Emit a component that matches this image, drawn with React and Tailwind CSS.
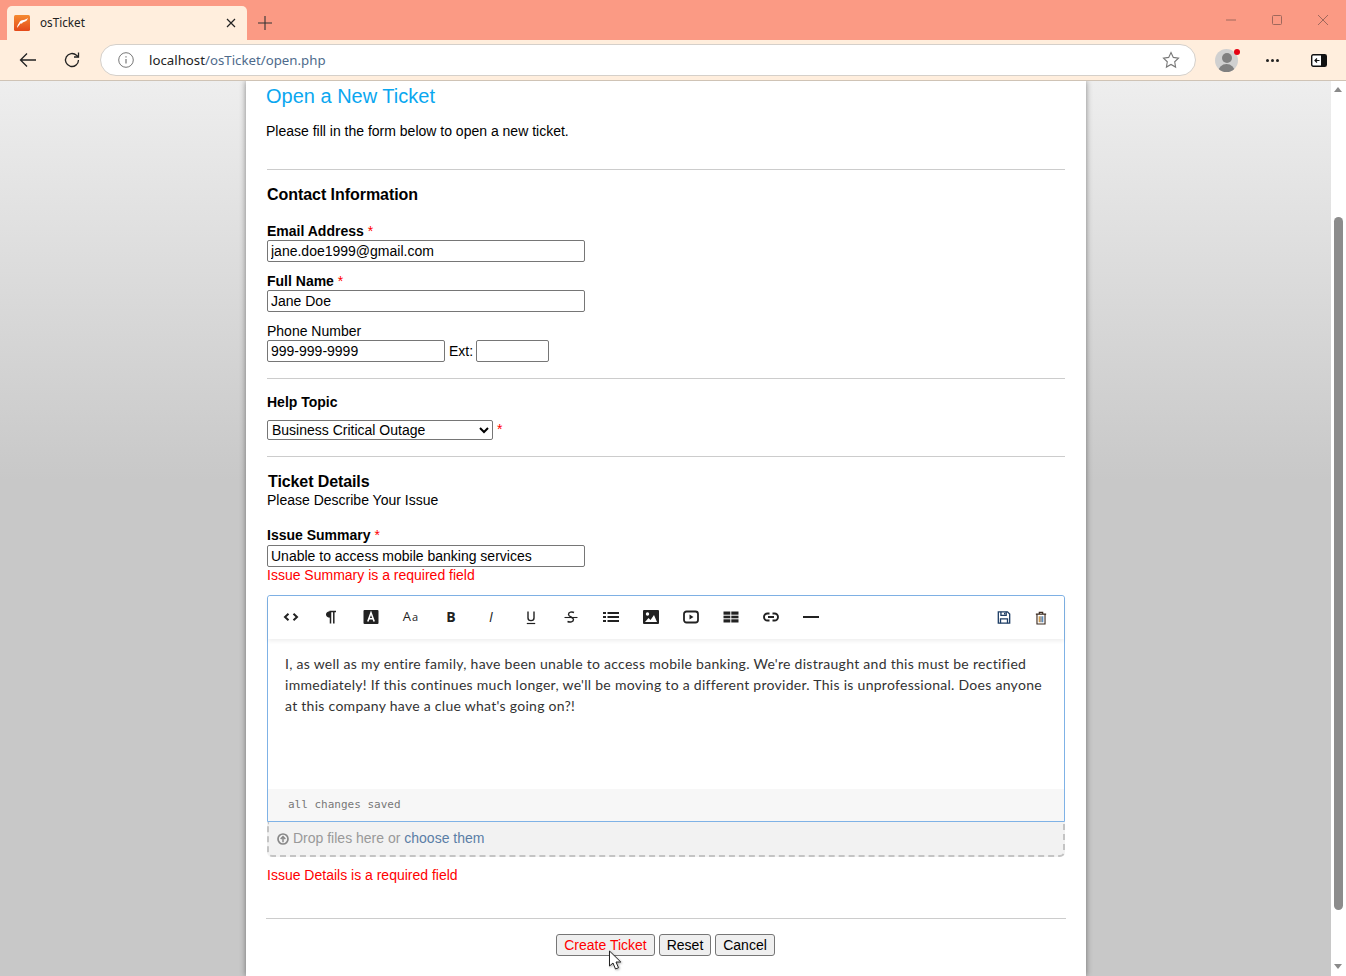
const F = { fontFamily: '"Liberation Sans", Arial, sans-serif' };

function Ic({ children, w = 16, h = 16, vb = "0 0 16 16", className = "" }) {
  return (
    <svg width={w} height={h} viewBox={vb} className={className} fill="none" stroke="#222" strokeWidth="1.5">
      {children}
    </svg>
  );
}

const toolbar = [
  <Ic key="code"><path d="M5.500 4.700 2 8l3.500 3.300M10.500 4.700 14 8l-3.500 3.300" strokeWidth="2" /></Ic>,
  <Ic key="para"><path d="M6.500 2.500h6.500M7.500 2.500v12M10.800 2.500v12" strokeWidth="1.500" /><path d="M7.500 2.300C4.300 2.300 3 3.800 3 5.500s1.300 3.200 4.500 3.200z" fill="#222" stroke="none" /></Ic>,
  <Ic key="color"><rect x=".5" y="1" width="15" height="14" rx="1" fill="#222" stroke="none" /><path d="M4.800 12.500 8 3.800l3.200 8.700M6 9.800h4" stroke="#fff" strokeWidth="1.600" /></Ic>,
  <span key="aa" className="text-[13px] leading-none text-[#222] tracking-[1px]" style={{ fontFamily: '"Open Sans", sans-serif' }}>A<span className="text-[11px]">a</span></span>,
  <span key="b" className="text-[14px] font-bold leading-none text-[#222]" style={{ fontFamily: '"Open Sans", sans-serif' }}>B</span>,
  <span key="i" className="text-[14px] italic leading-none text-[#222]" style={{ fontFamily: '"Open Sans", sans-serif' }}>I</span>,
  <Ic key="u"><path d="M5 2.500v6.500c0 3.500 6 3.500 6 0V2.500" strokeWidth="1.400" /><path d="M3.800 14.500h8.400" strokeWidth="1.200" /></Ic>,
  <Ic key="s"><path d="M1.500 8.500h13" strokeWidth="1.100" /><path d="M11 3.500C9 2.500 5.500 3 5.500 5.500 5.500 8 10.500 8 10.500 10.500c0 2.500-3.500 3-6 2" strokeWidth="1.400" /></Ic>,
  <Ic key="list"><path d="M4.500 4H16M4.500 8H16M4.500 12H16" strokeWidth="2" /><path d="M0 4h3M0 8h3M0 12h3" strokeWidth="2" /></Ic>,
  <Ic key="img"><rect x="0" y="1" width="16" height="14" rx="1" fill="#222" stroke="none" /><circle cx="4.500" cy="5" r="1.700" fill="#fff" stroke="none" /><path d="m2 13 3.500-4 2 2 3.500-5 3 7z" fill="#fff" stroke="none" /></Ic>,
  <Ic key="video"><rect x="1" y="2.500" width="14" height="11" rx="2.500" strokeWidth="1.800" /><path d="M6.500 5.500v5l4-2.500z" fill="#222" stroke="none" /></Ic>,
  <Ic key="table"><path d="M.5 2.500h15v11H.5z" fill="#222" stroke="none" /><path d="M0 6.200h16M0 9.800h16M7.800 2v12" stroke="#fff" strokeWidth="1" /></Ic>,
  <Ic key="link"><path d="M6.500 4.500H4.500a3.500 3.500 0 0 0 0 7h2M9.500 4.500h2a3.500 3.500 0 0 1 0 7h-2M5 8h6" strokeWidth="1.900" /></Ic>,
  <Ic key="hr"><path d="M0 8h16" strokeWidth="2" /></Ic>,
];

function Label({ children, req }) {
  return (
    <div className="h-[17px] text-[14px] font-bold leading-[17px] text-black">
      {children}
      {req && <span className="font-normal text-[#f00]"> *</span>}
    </div>
  );
}

function TextBox({ value, w }) {
  return (
    <input
      readOnly
      value={value}
      className={`${w} block h-[22px] rounded-[2px] border border-[#767676] bg-white px-[3px] text-[14px] text-black outline-none`}
      style={F}
    />
  );
}

function Hr({ className = "" }) {
  return <div className={`h-px bg-[#ccc] ${className}`} />;
}

export default function App() {
  return (
    <div className="flex h-[976px] w-[1346px] flex-col overflow-hidden" style={F}>
      {/* Tab strip */}
      <div className="flex h-10 shrink-0 items-end bg-[#fb9a84] pl-[7px]">
        <div className="flex h-[34px] w-[240px] items-center rounded-t-[5px] bg-[#ffeedd] pl-[7px] pr-[10px]">
          <svg width="16" height="16" viewBox="0 0 16 16">
            <defs>
              <linearGradient id="fav" x1="0" y1="0" x2="0" y2="1">
                <stop offset="0" stopColor="#f58a30" />
                <stop offset="1" stopColor="#e4491a" />
              </linearGradient>
            </defs>
            <rect width="16" height="16" rx="1.500" fill="url(#fav)" />
            <path d="M3 13c.2-2 .8-3.500 1.800-4.500C5.500 6 7.500 5 9.500 5c1.500-.2 3-.8 4.500-2-.5 1.500-1.500 3-3 3.500-1.500.5-2.500 1-3 2L6.500 8.500 5 10.500z" fill="#fff" />
          </svg>
          <span className="ml-[10px] flex-1 text-[11.700px] text-[#222]" style={{ fontFamily: '"Noto Sans", sans-serif' }}>osTicket</span>
          <svg width="10" height="10" viewBox="0 0 10 10" stroke="#222" strokeWidth="1.200" className="mr-[1px]"><path d="m1 1 8 8M9 1 1 9" /></svg>
        </div>
        <div className="flex h-[34px] w-[36px] items-center justify-center">
          <svg width="16" height="16" viewBox="0 0 16 16" stroke="#333" strokeWidth="1.100"><path d="M8 1v14M1 8h14" /></svg>
        </div>
        <div className="flex-1" />
        <div className="flex h-10 items-center gap-[34px] pr-[17px]">
          <svg width="12" height="12" viewBox="0 0 12 12" stroke="#a0685c" strokeWidth="1"><path d="M1 6h10" /></svg>
          <svg width="12" height="12" viewBox="0 0 12 12" stroke="#a0685c" strokeWidth="1" fill="none"><rect x="1.500" y="1.500" width="9" height="9" rx="1" /></svg>
          <svg width="12" height="12" viewBox="0 0 12 12" stroke="#a0685c" strokeWidth="1"><path d="m1 1 10 10M11 1 1 11" /></svg>
        </div>
      </div>

      {/* Toolbar */}
      <div className="flex h-[41px] shrink-0 items-center border-b border-[#cfc3b5] bg-[#ffeedd]">
        <div className="flex w-[100px] items-center gap-[26px] pl-[19px]">
          <svg width="18" height="16" viewBox="0 0 18 16" fill="none" stroke="#222" strokeWidth="1.300"><path d="M17 8H1.500M8 1.500 1.500 8 8 14.500" /></svg>
          <svg width="18" height="18" viewBox="0 0 18 18" fill="none" stroke="#222" strokeWidth="1.300"><path d="M15.500 9a6.500 6.500 0 1 1-2-4.700l2 1.700" /><path d="M15.500 1.500V6H11" /></svg>
        </div>
        <div className="flex h-8 w-[1096px] items-center rounded-full border border-[#d5d0ca] bg-white pl-[17px] pr-[15px]">
          <svg width="16" height="16" viewBox="0 0 16 16" fill="none" stroke="#777" strokeWidth="1"><circle cx="8" cy="8" r="7.300" /><path d="M8 7v4.500M8 4.300v1.200" strokeWidth="1.200" /></svg>
          <span className="ml-[15px] flex-1 pt-[1px] text-[13.250px] text-[#222]" style={{ fontFamily: '"Noto Sans", sans-serif' }}>
            localhost<span className="text-[#4e6b8c]">/osTicket/open.php</span>
          </span>
          <svg width="18" height="18" viewBox="0 0 18 18" fill="none" stroke="#777" strokeWidth="1.100"><path d="m9 1.500 2.300 4.900 5.200.7-3.800 3.700.9 5.300L9 13.500l-4.600 2.600.9-5.300L1.500 7.100l5.200-.7z" /></svg>
        </div>
        <div className="relative ml-[19px] h-[23px] w-[23px] overflow-hidden rounded-full bg-[#d0d0d0]">
          <div className="mx-auto mt-[4px] h-[10px] w-[10px] rounded-full bg-[#808080]" />
          <div className="mx-auto mt-[1px] h-[10px] w-[17px] rounded-t-full bg-[#808080]" />
        </div>
        <div className="relative -ml-[4px] -mt-[16px] h-[6px] w-[6px] rounded-full bg-[#e60012]" />
        <div className="ml-[26px] flex gap-[2px]">
          <span className="h-[3px] w-[3px] rounded-full bg-[#222]" />
          <span className="h-[3px] w-[3px] rounded-full bg-[#222]" />
          <span className="h-[3px] w-[3px] rounded-full bg-[#222]" />
        </div>
        <svg className="ml-[32px]" width="16" height="13" viewBox="0 0 16 13">
          <rect x=".7" y=".7" width="14.600" height="11.600" rx="1.500" fill="#fff" stroke="#111" strokeWidth="1.400" />
          <rect x="10" y="1" width="5" height="11" fill="#111" />
          <path d="M8.500 6.500H4.200M6 4.500l-2 2 2 2" stroke="#111" strokeWidth="1.200" fill="none" />
        </svg>
      </div>

      {/* Viewport */}
      <div className="flex min-h-0 flex-1">
        <div className="min-w-0 flex-1 overflow-hidden bg-[linear-gradient(#eeeeee_0px,#c8c8c8_400px,#c8c8c8_100%)]">
          <div className="ml-[246px] h-[895px] w-[840px] bg-white px-5 shadow-[0_0_6px_rgba(0,0,0,0.45)]">
            <h1 className="pt-[3px] text-[20px] leading-[24px] text-[#0aa7f0]">Open a New Ticket</h1>
            <p className="mt-[15px] text-[14px] leading-[16px] text-black">Please fill in the form below to open a new ticket.</p>
            <Hr className="ml-[1px] mt-[30px] w-[798px]" />
            <div className="ml-[1px]">
              <h2 className="mt-[15px] text-[16px] font-bold leading-[19px] tracking-[-0.05px] text-black">Contact Information</h2>
              <div className="mt-[19px]"><Label req>Email Address</Label></div>
              <TextBox value="jane.doe1999@gmail.com" w="w-[318px]" />
              <div className="mt-[11px]"><Label req>Full Name</Label></div>
              <TextBox value="Jane Doe" w="w-[318px]" />
              <div className="mt-[11px] h-[17px] text-[14px] leading-[17px] text-black">Phone Number</div>
              <div className="flex items-center text-[14px] text-black">
                <TextBox value="999-999-9999" w="w-[178px]" />
                <span className="ml-[4px] w-[27px]">Ext:</span>
                <TextBox value="" w="w-[73px]" />
              </div>
              <Hr className="mt-[16px] w-[798px]" />
              <div className="mt-[15px] h-[16px] text-[14px] font-bold leading-[16px] text-black">Help Topic</div>
              <div className="mt-[9px] flex items-center">
                <select
                  defaultValue="b"
                  className="h-5 w-[226px] rounded-[2px] border border-[#767676] bg-white text-[14px] text-black"
                  style={{ ...F, appearance: "auto" }}
                >
                  <option value="b">Business Critical Outage</option>
                </select>
                <span className="ml-[4px] text-[14px] text-[#f00]">*</span>
              </div>
              <Hr className="mt-[16px] w-[798px]" />
              <h2 className="ml-[1px] mt-[16px] text-[16px] font-bold leading-[18px] tracking-[-0.1px] text-black">Ticket Details</h2>
              <div className="h-[16px] text-[14px] leading-[18px] text-black">Please Describe Your Issue</div>
              <div className="mt-[20px]"><Label req>Issue Summary</Label></div>
              <div className="mt-[1px]"><TextBox value="Unable to access mobile banking services" w="w-[318px]" /></div>
              <div className="h-[17px] text-[14px] leading-[17px] text-[#f00]">Issue Summary is a required field</div>

              {/* Editor */}
              <div className="mt-[11px] w-[798px] rounded-t-[3px] border border-[#7fb2e6] bg-white">
                <div className="flex h-[43px] items-center rounded-t-[3px] bg-white shadow-[0_2px_4px_rgba(0,0,0,0.07)]">
                  {toolbar.map((icon, i) => (
                    <div key={i} className="flex h-[43px] w-[40px] items-center justify-center pb-[2px] first:ml-[3px]">
                      {icon}
                    </div>
                  ))}
                  <div className="flex-1" />
                  <div className="mr-[2px] flex h-[43px] w-[37px] items-center justify-center">
                    <svg width="14" height="15" viewBox="0 0 16 16" fill="none" stroke="#1e3e66" strokeWidth="1.500">
                      <path d="M1.500 1.500h10.500l2.500 2.500v10.500h-13z" />
                      <path d="M4.500 1.500v4h6v-4M4 14.500V9.500h8v5" />
                      <path d="M8 2.500h1.500v2H8z" fill="#1e3e66" stroke="none" />
                    </svg>
                  </div>
                  <div className="mr-[6px] flex h-[43px] w-[34px] items-center justify-center">
                    <svg width="12" height="14" viewBox="0 0 14 16" fill="none" stroke="#3a2a20" strokeWidth="1.300">
                      <path d="M1 3.500h12M5 3.300V1.500h4v1.800M2.300 3.500v11.500h9.400V3.500" />
                      <path d="M5 6v7" stroke="#c8892d" strokeWidth="1.300" />
                      <path d="M7 6v7" stroke="#555" strokeWidth="1.300" />
                      <path d="M9 6v7" stroke="#3c78b4" strokeWidth="1.300" />
                    </svg>
                  </div>
                </div>
                <div
                  className="h-[150px] px-[17px] pt-[14px] text-[14px] leading-[21px] tracking-[0.28px] text-[#333]"
                  style={{ fontFamily: 'Lato, "Noto Sans", sans-serif' }}
                >
                  I, as well as my entire family, have been unable to access mobile banking. We&apos;re distraught and this must be rectified immediately! If this continues much longer, we&apos;ll be moving to a different provider. This is unprofessional. Does anyone at this company have a clue what&apos;s going on?!
                </div>
                <div className="h-[32px] bg-[#f7f7f7] pl-[20px] pt-[9px] text-[11px] leading-[14px] text-[#777]" style={{ fontFamily: '"DejaVu Sans Mono", monospace' }}>
                  all changes saved
                </div>
              </div>
              <div className="flex h-[35px] w-[798px] items-center rounded-b-[5px] border-x-2 border-b-2 border-dashed border-[#c4c4c4] bg-[#f2f2f2] pl-[8px] text-[14px] text-[#999]">
                <svg width="12" height="12" viewBox="0 0 12 12" className="mr-[4px]">
                  <circle cx="6" cy="6" r="5" fill="none" stroke="#888" strokeWidth="1.700" />
                  <path d="M6 9.200V4M3.700 6 6 3.500 8.300 6" fill="none" stroke="#888" strokeWidth="1.500" />
                </svg>
                Drop files here or&nbsp;<span className="text-[#5a7ea6]">choose them</span>
              </div>
              <div className="mt-[10px] h-[17px] text-[14px] leading-[17px] text-[#f00]">Issue Details is a required field</div>
            </div>
            <Hr className="mt-[34px] w-[800px]" />
            <div className="mt-[15px] flex justify-center gap-[4px] pr-[1px] text-[14px]">
              <button className="h-[22px] w-[99px] rounded-[3px] border border-[#767676] bg-[#efefef] text-[#f00]">Create Ticket</button>
              <button className="h-[22px] w-[52px] rounded-[3px] border border-[#767676] bg-[#efefef] text-black">Reset</button>
              <button className="h-[22px] w-[60px] rounded-[3px] border border-[#767676] bg-[#efefef] text-black">Cancel</button>
            </div>
          </div>
        </div>

        {/* Scrollbar */}
        <div className="relative w-[15px] shrink-0 bg-white">
          <div className="absolute left-[3px] top-[6px] h-0 w-0 border-x-[4.500px] border-b-[5px] border-x-transparent border-b-[#8a8a8a]" />
          <div className="absolute left-[3px] top-[136px] h-[693px] w-[9px] rounded-full bg-[#8c8c8c]" />
          <div className="absolute bottom-[7px] left-[3px] h-0 w-0 border-x-[4.500px] border-t-[5px] border-x-transparent border-t-[#8a8a8a]" />
        </div>
      </div>

      {/* Cursor */}
      <svg className="absolute left-[608px] top-[950px] drop-shadow-[1px_1px_1px_rgba(0,0,0,0.3)]" width="16" height="22" viewBox="0 0 16 22">
        <path d="M1.500 1v15l3.500-3 2.500 6 3-1.300-2.500-5.700h4.800z" fill="#fff" stroke="#222" strokeWidth="1" />
      </svg>
    </div>
  );
}
